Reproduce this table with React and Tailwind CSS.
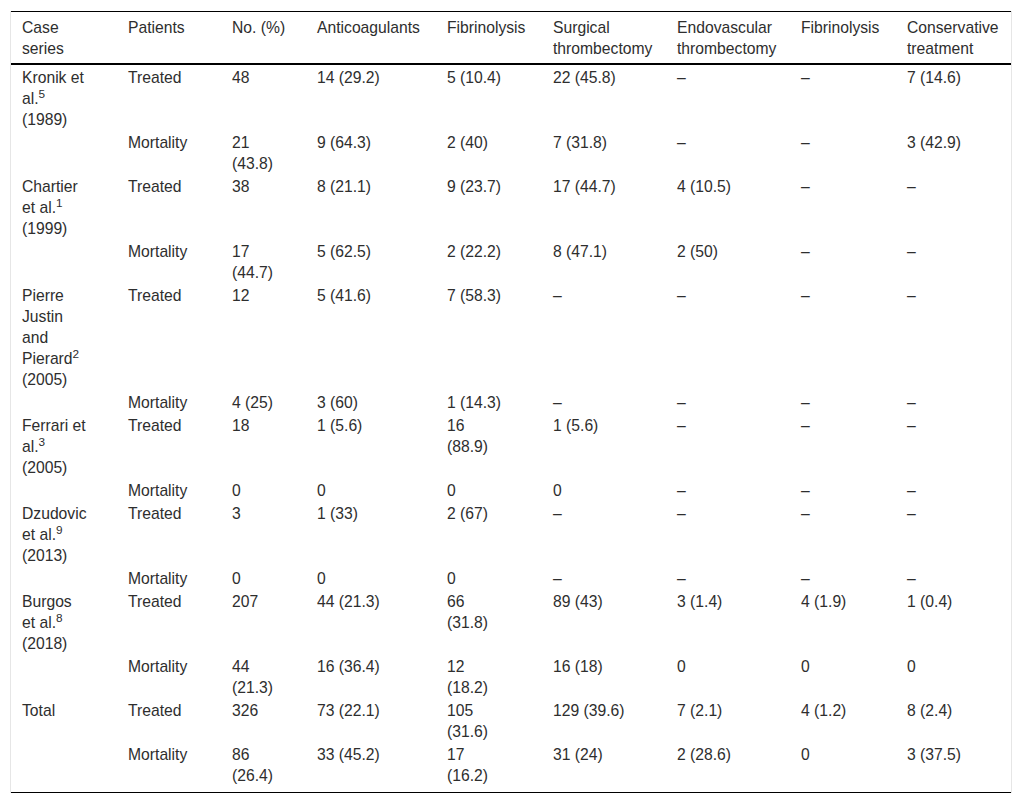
const cols = [
  { w: 'w-[106px]', th: 'pr-[30px]', td: 'pr-[30px]' },
  { w: 'w-[104px]', th: 'pr-2', td: 'pr-2' },
  { w: 'w-[85px]', th: 'pr-[17px]', td: 'pr-[17px]' },
  { w: 'w-[130px]', th: 'pr-2', td: 'pr-2' },
  { w: 'w-[106px]', th: 'pr-2', td: 'pr-[37px]' },
  { w: 'w-[124px]', th: 'pr-2', td: 'pr-2' },
  { w: 'w-[124px]', th: 'pr-2', td: 'pr-2' },
  { w: 'w-[106px]', th: 'pr-2', td: 'pr-2' },
  { w: 'w-[115px]', th: 'pr-2', td: 'pr-2' },
]

const head = [
  'Case series', 'Patients', 'No. (%)', 'Anticoagulants', 'Fibrinolysis',
  'Surgical thrombectomy', 'Endovascular thrombectomy', 'Fibrinolysis', 'Conservative treatment',
]

const study = (name, sup, year) => (
  <>
    {name}
    {sup && <sup>{sup}</sup>} {year}
  </>
)

const rows = [
  [study('Kronik et al.', '5', '(1989)'), 'Treated', '48', '14 (29.2)', '5 (10.4)', '22 (45.8)', '–', '–', '7 (14.6)'],
  ['', 'Mortality', '21 (43.8)', '9 (64.3)', '2 (40)', '7 (31.8)', '–', '–', '3 (42.9)'],
  [study('Chartier et al.', '1', '(1999)'), 'Treated', '38', '8 (21.1)', '9 (23.7)', '17 (44.7)', '4 (10.5)', '–', '–'],
  ['', 'Mortality', '17 (44.7)', '5 (62.5)', '2 (22.2)', '8 (47.1)', '2 (50)', '–', '–'],
  [study('Pierre Justin and Pierard', '2', '(2005)'), 'Treated', '12', '5 (41.6)', '7 (58.3)', '–', '–', '–', '–'],
  ['', 'Mortality', '4 (25)', '3 (60)', '1 (14.3)', '–', '–', '–', '–'],
  [study('Ferrari et al.', '3', '(2005)'), 'Treated', '18', '1 (5.6)', '16 (88.9)', '1 (5.6)', '–', '–', '–'],
  ['', 'Mortality', '0', '0', '0', '0', '–', '–', '–'],
  [study('Dzudovic et al.', '9', '(2013)'), 'Treated', '3', '1 (33)', '2 (67)', '–', '–', '–', '–'],
  ['', 'Mortality', '0', '0', '0', '–', '–', '–', '–'],
  [study('Burgos et al.', '8', '(2018)'), 'Treated', '207', '44 (21.3)', '66 (31.8)', '89 (43)', '3 (1.4)', '4 (1.9)', '1 (0.4)'],
  ['', 'Mortality', '44 (21.3)', '16 (36.4)', '12 (18.2)', '16 (18)', '0', '0', '0'],
  ['Total', 'Treated', '326', '73 (22.1)', '105 (31.6)', '129 (39.6)', '7 (2.1)', '4 (1.2)', '8 (2.4)'],
  ['', 'Mortality', '86 (26.4)', '33 (45.2)', '17 (16.2)', '31 (24)', '2 (28.6)', '0', '3 (37.5)'],
]

export default function App() {
  return (
    <div className="min-h-[804px] bg-white pt-[11px] pl-[10px] font-['Liberation_Sans',Arial,sans-serif] text-[15.7px] leading-[21px] text-[#2e2e2e]">
      <div className="w-[1002px] border-x border-[#e6e6e6]">
        <table className="w-[1000px] table-fixed border-separate border-spacing-0">
          <colgroup>
            {cols.map((c, i) => (
              <col key={i} className={c.w} />
            ))}
          </colgroup>
          <thead>
            <tr>
              {head.map((h, i) => (
                <th
                  key={i}
                  className={`border-t border-b-2 border-black pl-[11px] pt-[5px] pb-[4px] text-left align-top font-normal ${cols[i].th}`}
                >
                  {h}
                </th>
              ))}
            </tr>
          </thead>
          <tbody>
            {rows.map((r, ri) => {
              const last = ri === rows.length - 1
              return (
                <tr key={ri}>
                  {r.map((cell, ci) => (
                    <td
                      key={ci}
                      className={`pl-[11px] pt-[2px] align-top ${cols[ci].td} ${last ? 'border-b border-black pb-[6px]' : ''}`}
                    >
                      {cell}
                    </td>
                  ))}
                </tr>
              )
            })}
          </tbody>
        </table>
      </div>
    </div>
  )
}
